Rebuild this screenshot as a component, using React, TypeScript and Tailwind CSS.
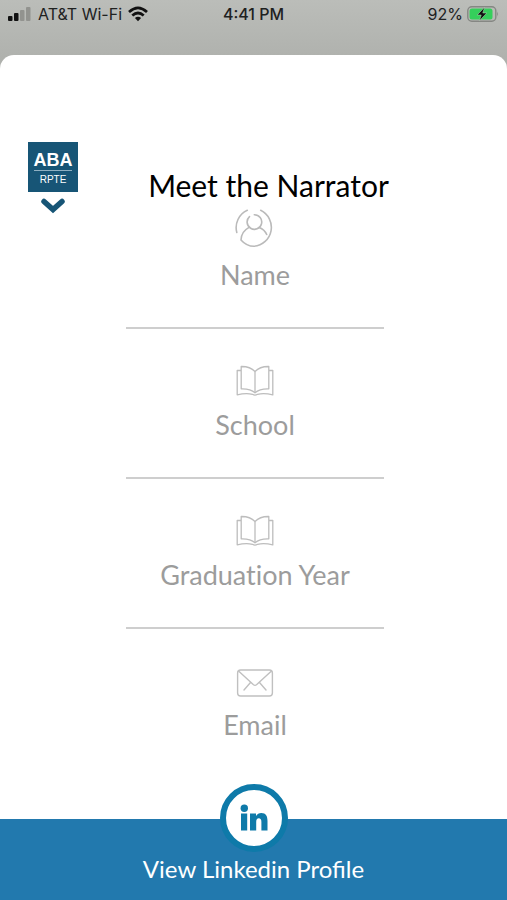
import type { ReactNode } from "react";

function SignalIcon() {
  return (
    <svg className="h-4 w-6 shrink-0" viewBox="0 0 24 16" aria-hidden="true">
      <rect x="0" y="10" width="4.500" height="5" rx="1" fill="#111" />
      <rect x="6" y="7" width="4.500" height="8" rx="1" fill="#111" />
      <rect x="12" y="4" width="4.500" height="11" rx="1" fill="#92938f" />
      <rect x="18" y="1" width="4.500" height="14" rx="1" fill="#92938f" />
    </svg>
  );
}

function WifiIcon() {
  return (
    <svg className="h-4 w-5 shrink-0" viewBox="0 0 20 16" fill="none" stroke="#111" strokeWidth="2.700" aria-hidden="true">
      <path d="M1 6 Q10 -2.200 19 6" />
      <path d="M4.300 9.600 Q10 4.400 15.700 9.600" />
      <path d="M10 15.200 L6.900 12 Q10 9.600 13.100 12 Z" fill="#111" stroke="none" />
    </svg>
  );
}

function BatteryIcon() {
  return (
    <svg className="h-4 w-8 shrink-0" viewBox="0 0 32 16" aria-hidden="true">
      <rect x="0.800" y="0.800" width="28" height="14.400" rx="4" fill="none" stroke="#858783" strokeWidth="1.400" />
      <rect x="2.500" y="2.500" width="23" height="11" rx="2.500" fill="#35cf5b" />
      <path d="M30.200 5.500 Q32 8 30.200 10.500 Z" fill="#858783" />
      <path d="M17.600 1.200 L10.200 9 H14.200 L12.400 14.800 L19.800 7 H15.800 Z" fill="#111" stroke="#b5d8b9" strokeWidth="0.500" />
    </svg>
  );
}

function PersonIcon() {
  return (
    <svg className="h-11 w-10" viewBox="0 0 40 44" fill="none" stroke="#bababa" strokeWidth="1.600" strokeLinecap="round" aria-hidden="true">
      <path d="M12.300 1.300 A19 19 0 0 0 1.800 23.500" />
      <path d="M25.700 1.300 A19 19 0 0 1 19 37.300 Q11.500 37.300 6 31 Q6.300 22.500 13.700 18.600" />
      <path d="M14.500 7.600 A7.300 7.300 0 1 0 19.300 5.700" />
      <path d="M24.300 18.600 Q29.500 20.700 31.700 25.500" />
    </svg>
  );
}

function BookIcon() {
  return (
    <svg className="h-11 w-10" viewBox="0 0 40 44" fill="none" stroke="#bdbdbd" strokeWidth="1.300" strokeLinejoin="round" aria-hidden="true">
      <path d="M20 12.500 Q15 7.300 6.200 7.500 V29.800 Q15.500 29.500 20 33.800 Q24.500 29.500 33.800 29.800 V7.500 Q25 7.300 20 12.500 Z" />
      <path d="M20 12.500 V33.500" />
      <path d="M6 11.500 H2.200 V35.800 Q11 33.800 17.500 35.300 Q20 37 22.500 35.300 Q29 33.800 37.800 35.800 V11.500 H34" />
    </svg>
  );
}

function EnvelopeIcon() {
  return (
    <svg className="h-11 w-10" viewBox="0 0 40 44" fill="none" stroke="#c0c0c0" strokeWidth="1.400" strokeLinecap="round" strokeLinejoin="round" aria-hidden="true">
      <rect x="2.600" y="11" width="34.800" height="26" rx="3" />
      <path d="M3.800 12.200 L18.500 25.800 Q20 27 21.500 25.800 L36.200 12.200" />
      <path d="M15.500 23.500 L9 31 M24.500 23.500 L31 31" />
    </svg>
  );
}

function LinkedinMark() {
  return (
    <svg className="h-7 w-7" viewBox="0 0 28 28" fill="#0e7aa9" aria-hidden="true">
      <circle cx="4.300" cy="4.200" r="3.700" />
      <rect x="1" y="9.500" width="6.200" height="17" />
      <path d="M10 9.500 H16 V12 Q17.800 9.100 21.300 9.100 C26 9.100 27.500 12.300 27.500 17 V26.500 H21.400 V18 Q21.400 14.300 18.800 14.300 Q16.200 14.300 16.200 18 V26.500 H10 Z" />
    </svg>
  );
}

const details: { label: string; icon: ReactNode }[] = [
  { label: "Name", icon: <PersonIcon /> },
  { label: "School", icon: <BookIcon /> },
  { label: "Graduation Year", icon: <BookIcon /> },
  { label: "Email", icon: <EnvelopeIcon /> },
];

export default function App() {
  return (
    <div className="flex min-h-screen flex-col bg-linear-to-b from-[#bbbdb9] to-[#afb1ad] to-[60px] font-['Lato',sans-serif]">
      <div className="grid h-[55px] shrink-0 grid-cols-[1fr_auto_1fr] items-start px-2 pt-1 font-['Inter',sans-serif] text-base leading-5 text-[#20211f]">
        <div className="flex items-center gap-[6px] whitespace-nowrap">
          <SignalIcon />
          <span>AT&amp;T Wi-Fi</span>
          <WifiIcon />
        </div>
        <time className="font-medium">4:41 PM</time>
        <div className="flex items-center justify-end gap-1">
          <span>92%</span>
          <BatteryIcon />
        </div>
      </div>

      <main className="flex flex-1 flex-col rounded-t-[14px] bg-white pt-[87px]">
        <header className="flex h-[67px] shrink-0 items-start pr-12 pl-7">
          <button type="button" aria-label="Close" className="flex w-[50px] shrink-0 flex-col items-center gap-[6px]">
            <span className="flex h-[50px] w-full flex-col items-center bg-[#175576] pt-[9px] text-white">
              <span className="font-['Liberation_Sans',sans-serif] text-lg leading-[19px] font-bold">ABA</span>
              <span className="h-px w-[38px] bg-[#8fb0c2]" />
              <span className="pt-[3px] font-['Liberation_Sans',sans-serif] text-[10px] leading-3">RPTE</span>
            </span>
            <svg className="h-4 w-6" viewBox="0 0 24 16" fill="none" stroke="#175576" strokeWidth="5.500" strokeLinecap="round" aria-hidden="true">
              <path d="M3 3.500 L12 11.500 L21 3.500" />
            </svg>
          </button>
          <h1 className="flex-1 pt-[25px] text-center text-[30px] leading-9 text-black">Meet the Narrator</h1>
        </header>

        <div className="pl-[3px]">
          <ul className="mx-auto w-[51%] divide-y-2 divide-[#cecece] [font-variant-ligatures:none]">
            {details.map(({ label, icon }) => (
              <li key={label} className="flex flex-col items-center gap-[6px] pt-[30px] pb-9 first:pt-0">
                {icon}
                <span className="text-[27px] leading-8 text-[#9c9c9c]">{label}</span>
              </li>
            ))}
          </ul>
        </div>

        <a href="#linkedin" className="mt-auto flex flex-col items-center bg-[#2279ae] pb-4 text-white">
          <span className="-mt-[35px] flex h-[68px] w-[68px] items-center justify-center rounded-full border-[6px] border-[#0e7aa9] bg-white">
            <LinkedinMark />
          </span>
          <span className="pt-[2px] text-2xl leading-[30px]">View Linkedin Profile</span>
        </a>
      </main>
    </div>
  );
}
